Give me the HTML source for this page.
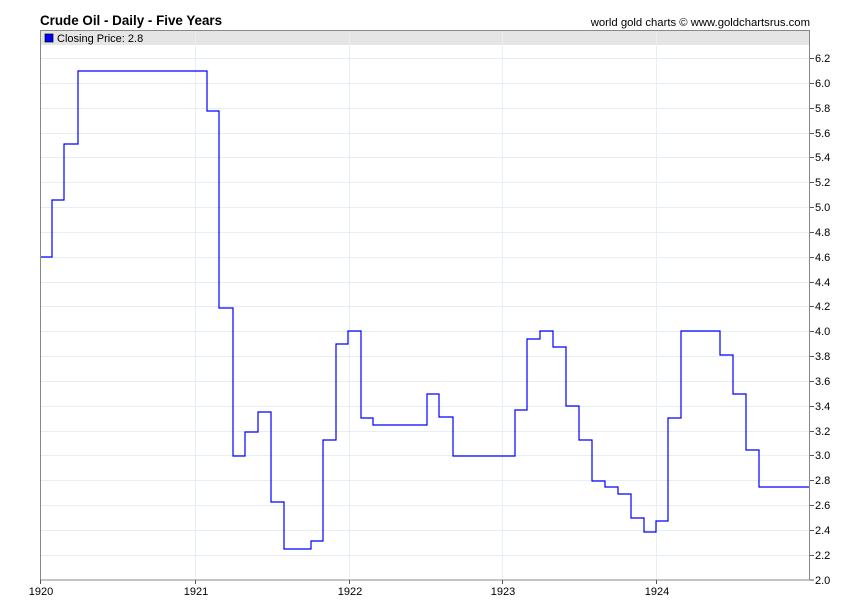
<!DOCTYPE html>
<html><head><meta charset="utf-8"><style>
html,body{margin:0;padding:0;background:#fff;}
svg{display:block;font-family:"Liberation Sans",Arial,sans-serif;}
</style></head><body>
<svg width="850" height="616" viewBox="0 0 850 616" xmlns="http://www.w3.org/2000/svg">
<rect width="850" height="616" fill="#fff"/>
<text x="40" y="25" font-size="13.4" font-weight="bold" fill="#000">Crude Oil - Daily - Five Years</text>
<text x="810" y="26" font-size="11.3" fill="#000" text-anchor="end">world gold charts © www.goldchartsrus.com</text>
<rect x="40.5" y="31" width="769" height="14" fill="#e5e5e5"/>
<g stroke="#e4eff8" stroke-width="1">
<line x1="40" x2="810" y1="58.5" y2="58.5"/><line x1="40" x2="810" y1="83.5" y2="83.5"/><line x1="40" x2="810" y1="108.5" y2="108.5"/><line x1="40" x2="810" y1="133.5" y2="133.5"/><line x1="40" x2="810" y1="157.5" y2="157.5"/><line x1="40" x2="810" y1="182.5" y2="182.5"/><line x1="40" x2="810" y1="207.5" y2="207.5"/><line x1="40" x2="810" y1="232.5" y2="232.5"/><line x1="40" x2="810" y1="257.5" y2="257.5"/><line x1="40" x2="810" y1="282.5" y2="282.5"/><line x1="40" x2="810" y1="306.5" y2="306.5"/><line x1="40" x2="810" y1="331.5" y2="331.5"/><line x1="40" x2="810" y1="356.5" y2="356.5"/><line x1="40" x2="810" y1="381.5" y2="381.5"/><line x1="40" x2="810" y1="406.5" y2="406.5"/><line x1="40" x2="810" y1="431.5" y2="431.5"/><line x1="40" x2="810" y1="455.5" y2="455.5"/><line x1="40" x2="810" y1="480.5" y2="480.5"/><line x1="40" x2="810" y1="505.5" y2="505.5"/><line x1="40" x2="810" y1="530.5" y2="530.5"/><line x1="40" x2="810" y1="555.5" y2="555.5"/>
<line x1="195.5" x2="195.5" y1="31" y2="580"/><line x1="349.5" x2="349.5" y1="31" y2="580"/><line x1="502.5" x2="502.5" y1="31" y2="580"/><line x1="656.5" x2="656.5" y1="31" y2="580"/>
</g>
<rect x="45" y="34" width="8" height="8" fill="#0000ff" stroke="#000" stroke-width="0.7"/>
<text x="57" y="42" font-size="11" fill="#000">Closing Price: 2.8</text>
<polyline fill="none" stroke="#0000ff" stroke-width="1.2" points="40,257 52,257 52,200 64,200 64,144 78,144 78,71 207,71 207,111 219,111 219,308 233,308 233,456 245,456 245,432 258,432 258,412 271,412 271,502 284,502 284,549 311,549 311,541 323,541 323,440 336,440 336,344 348,344 348,331 361,331 361,418 373,418 373,425 427,425 427,394 439,394 439,417 453,417 453,456 515,456 515,410 527,410 527,339 540,339 540,331 553,331 553,347 566,347 566,406 579,406 579,440 592,440 592,481 605,481 605,487 618,487 618,494 631,494 631,518 644,518 644,532 656,532 656,521 668,521 668,418 681,418 681,331 720,331 720,355 733,355 733,394 746,394 746,450 759,450 759,487 810,487"/>
<rect x="40.5" y="30.5" width="769" height="549.5" fill="none" stroke="#888" stroke-width="1"/>
<g stroke="#555" stroke-width="1">
<line x1="810" x2="814" y1="58.5" y2="58.5"/><line x1="810" x2="814" y1="83.5" y2="83.5"/><line x1="810" x2="814" y1="108.5" y2="108.5"/><line x1="810" x2="814" y1="133.5" y2="133.5"/><line x1="810" x2="814" y1="157.5" y2="157.5"/><line x1="810" x2="814" y1="182.5" y2="182.5"/><line x1="810" x2="814" y1="207.5" y2="207.5"/><line x1="810" x2="814" y1="232.5" y2="232.5"/><line x1="810" x2="814" y1="257.5" y2="257.5"/><line x1="810" x2="814" y1="282.5" y2="282.5"/><line x1="810" x2="814" y1="306.5" y2="306.5"/><line x1="810" x2="814" y1="331.5" y2="331.5"/><line x1="810" x2="814" y1="356.5" y2="356.5"/><line x1="810" x2="814" y1="381.5" y2="381.5"/><line x1="810" x2="814" y1="406.5" y2="406.5"/><line x1="810" x2="814" y1="431.5" y2="431.5"/><line x1="810" x2="814" y1="455.5" y2="455.5"/><line x1="810" x2="814" y1="480.5" y2="480.5"/><line x1="810" x2="814" y1="505.5" y2="505.5"/><line x1="810" x2="814" y1="530.5" y2="530.5"/><line x1="810" x2="814" y1="555.5" y2="555.5"/><line x1="810" x2="814" y1="580" y2="580"/>
<line x1="40.5" x2="40.5" y1="580" y2="584"/><line x1="195.5" x2="195.5" y1="580" y2="584"/><line x1="349.5" x2="349.5" y1="580" y2="584"/><line x1="502.5" x2="502.5" y1="580" y2="584"/><line x1="656.5" x2="656.5" y1="580" y2="584"/>
</g>
<g font-size="11" fill="#000">
<text x="815" y="62">6.2</text><text x="815" y="87">6.0</text><text x="815" y="112">5.8</text><text x="815" y="137">5.6</text><text x="815" y="161">5.4</text><text x="815" y="186">5.2</text><text x="815" y="211">5.0</text><text x="815" y="236">4.8</text><text x="815" y="261">4.6</text><text x="815" y="286">4.4</text><text x="815" y="310">4.2</text><text x="815" y="335">4.0</text><text x="815" y="360">3.8</text><text x="815" y="385">3.6</text><text x="815" y="410">3.4</text><text x="815" y="435">3.2</text><text x="815" y="459">3.0</text><text x="815" y="484">2.8</text><text x="815" y="509">2.6</text><text x="815" y="534">2.4</text><text x="815" y="559">2.2</text><text x="815" y="584">2.0</text>
</g>
<g font-size="11" fill="#000" text-anchor="middle">
<text x="41" y="595">1920</text><text x="196" y="595">1921</text><text x="350" y="595">1922</text><text x="503" y="595">1923</text><text x="657" y="595">1924</text>
</g>
</svg>
</body></html>
